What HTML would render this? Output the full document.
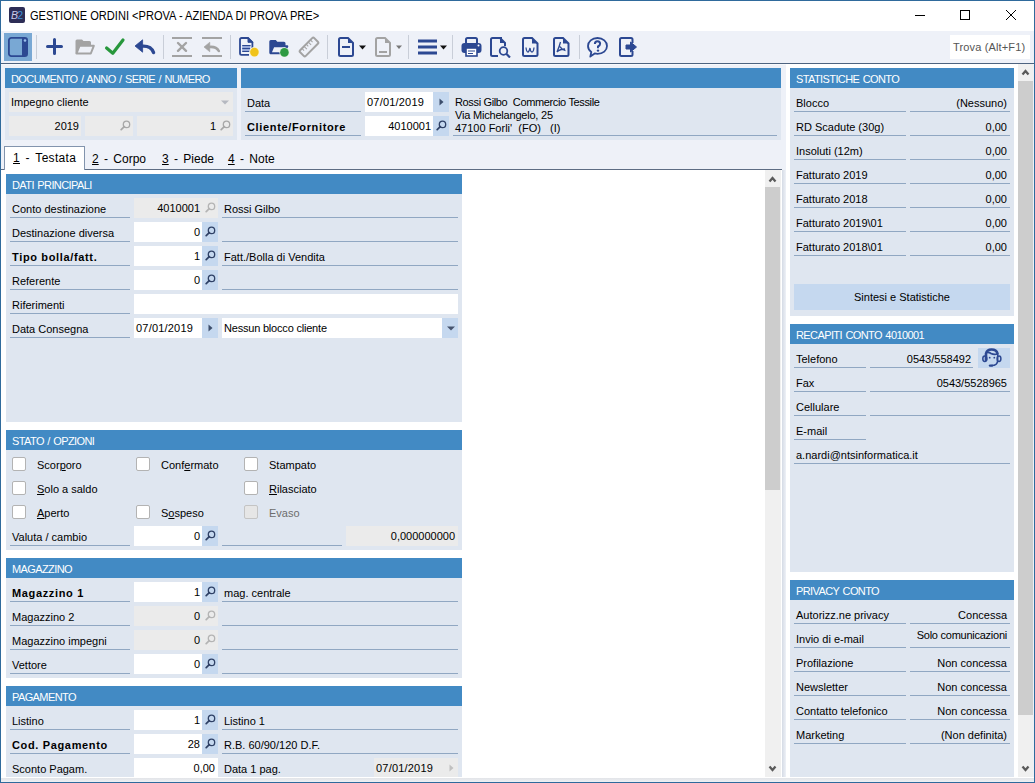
<!DOCTYPE html><html><head><meta charset="utf-8"><style>
html,body{margin:0;padding:0;}
body{width:1035px;height:783px;overflow:hidden;position:relative;background:#2f6a9c;font-family:"Liberation Sans",sans-serif;font-size:11px;color:#000;}
div,svg{position:absolute;}
.t{white-space:pre;}
u{text-decoration:underline;text-underline-offset:1px;}
</style></head><body>
<div style="left:1px;top:1px;width:1033px;height:781px;background:#eef1f8;"></div>
<div style="left:1px;top:1px;width:1033px;height:30px;background:#fff;"></div>
<div style="left:9px;top:7px;width:16px;height:16px;background:#2d2d56;border-radius:2px;"></div>
<div class="t" style="left:11px;top:8px;line-height:14px;font-size:10.5px;font-style:italic;color:#c9c9e6;letter-spacing:-0.8px;">B<span style="color:#3d93d6;font-style:normal;">2</span></div>
<div class="t" style="left:30px;top:8px;line-height:16px;font-size:12px;transform:scaleX(0.922);transform-origin:0 0;">GESTIONE ORDINI &lt;PROVA - AZIENDA DI PROVA PRE&gt;</div>
<div style="left:915px;top:15px;width:10px;height:1px;background:#000;"></div>
<div style="left:960px;top:10px;width:8px;height:8px;border:1px solid #000;"></div>
<svg style="left:1005px;top:9px;" width="12" height="12" viewBox="0 0 12 12"><path d="M1 1 L11 11 M11 1 L1 11" stroke="#000" stroke-width="1"/></svg>
<div style="left:1px;top:31px;width:1033px;height:32px;background:#eef1f8;"></div>
<div style="left:1px;top:63px;width:1033px;height:1px;background:#4d6380;"></div>
<div style="left:1px;top:64px;width:1033px;height:1px;background:#f7f9fc;"></div>
<div style="left:4px;top:33px;width:28px;height:28px;background:#79a8d4;"></div>
<svg style="left:8px;top:37px;" width="20" height="20" viewBox="0 0 20 20"><rect x="0.9" y="0.9" width="18.2" height="18.2" rx="2.4" fill="none" stroke="#2c4892" stroke-width="1.8"/><rect x="14" y="1" width="5" height="18" fill="#2c4892"/><circle cx="17" cy="3.5" r="1.3" fill="#9cc0ec"/></svg>
<div style="left:36px;top:35px;width:1px;height:24px;background:#c9ced8;"></div>
<div style="left:163px;top:35px;width:1px;height:24px;background:#c9ced8;"></div>
<div style="left:230px;top:35px;width:1px;height:24px;background:#c9ced8;"></div>
<div style="left:327px;top:35px;width:1px;height:24px;background:#c9ced8;"></div>
<div style="left:408px;top:35px;width:1px;height:24px;background:#c9ced8;"></div>
<div style="left:452px;top:35px;width:1px;height:24px;background:#c9ced8;"></div>
<div style="left:579px;top:35px;width:1px;height:24px;background:#c9ced8;"></div>
<svg style="left:46px;top:38px;" width="17" height="17" viewBox="0 0 17 17"><path d="M8.5 1.5 V15.5 M1.5 8.5 H15.5" stroke="#2c4892" stroke-width="3" stroke-linecap="round"/></svg>
<svg style="left:75px;top:39px;" width="20" height="16" viewBox="0 0 20 16"><path d="M0.5 2 Q0.5 0.5 2 0.5 H7 L8.5 2 H14.5 Q16 2 16 3.5 V6 H4.5 L1.5 14.5 H0.5 Z" fill="#a3a3a3"/><path d="M1.5 14.5 L4.5 6.8 H18.8 L15.8 14.5 Z" fill="none" stroke="#a3a3a3" stroke-width="2" stroke-linejoin="round"/></svg>
<svg style="left:104px;top:37px;" width="22" height="19" viewBox="0 0 22 19"><path d="M2.6 11 L8.8 16.2 L19 3" fill="none" stroke="#27973c" stroke-width="3.2" stroke-linecap="round" stroke-linejoin="round"/></svg>
<svg style="left:134px;top:39px;" width="22" height="16" viewBox="0 0 22 16"><path d="M1 7 L8.6 0.8 V13.2 Z" fill="#2c4892" stroke="#2c4892" stroke-width="0.8" stroke-linejoin="round"/><path d="M7.5 7.3 Q17 6.5 19.6 13.6" fill="none" stroke="#2c4892" stroke-width="3.3" stroke-linecap="round"/></svg>
<svg style="left:171px;top:37px;" width="22" height="21" viewBox="0 0 22 21"><path d="M1 1 H21 M1 19 H21" stroke="#a3a3a3" stroke-width="2"/><path d="M7 6 L15 13.8 M15 6 L7 13.8" stroke="#a3a3a3" stroke-width="2.4" stroke-linecap="round"/></svg>
<svg style="left:201px;top:37px;" width="22" height="21" viewBox="0 0 22 21"><path d="M1 1 H21 M1 19 H21" stroke="#a3a3a3" stroke-width="2"/><path d="M3 10 L8.8 5.2 V14.8 Z" fill="#a3a3a3" stroke="#a3a3a3" stroke-width="0.6" stroke-linejoin="round"/><path d="M8 10 Q15.5 9.3 17.8 14" fill="none" stroke="#a3a3a3" stroke-width="2.6" stroke-linecap="round"/></svg>
<svg style="left:238px;top:36px;" width="22" height="22" viewBox="0 0 22 22"><path d="M10 2 H3.6 Q2 2 2 3.6 V17.2 Q2 18.8 3.6 18.8 H11" fill="none" stroke="#2c4892" stroke-width="1.8"/><path d="M9.5 2 H10 L14.4 6.4 V12" fill="none" stroke="#2c4892" stroke-width="1.8"/><path d="M10 1.5 L14.8 6.3 H10 Z" fill="#2c4892" stroke="#2c4892" stroke-width="1"/><rect x="4.2" y="9.6" width="8" height="5.8" fill="#b9c9f1"/><path d="M4.2 9.6 H12.6 M4.2 12.5 H12.2 M4.2 15.4 H11.5" stroke="#2c4892" stroke-width="1.3"/><circle cx="16.4" cy="16.1" r="5" fill="#fbf3cf"/><circle cx="16.4" cy="16.1" r="4.3" fill="#f0c31a"/></svg>
<svg style="left:268px;top:39px;" width="22" height="18" viewBox="0 0 22 18"><path d="M1.3 2.5 Q1.3 1 2.8 1 H7.8 L9.3 2.8 H16 Q17.5 2.8 17.5 4.3 V7.5 H5.5 L2.5 14.5 Q1.3 14.3 1.3 13 Z" fill="#2c4892"/><path d="M2.5 14.2 L5.5 7.2 H19.3 L16 14.2 Z" fill="none" stroke="#2c4892" stroke-width="2" stroke-linejoin="round"/><circle cx="16.4" cy="13.4" r="5" fill="#e3f3e0"/><circle cx="16.4" cy="13.4" r="4.3" fill="#2e9a43"/></svg>
<svg style="left:298px;top:36px;" width="22" height="22" viewBox="0 0 22 22"><g transform="rotate(-45 11 11)"><rect x="1" y="7" width="20" height="8" rx="1.5" fill="none" stroke="#a3a3a3" stroke-width="2"/><path d="M5 7 V10 M8 7 V11 M11 7 V10 M14 7 V11 M17 7 V10" stroke="#a3a3a3" stroke-width="1"/></g></svg>
<svg style="left:338px;top:37px;" width="16" height="20" viewBox="0 0 16 20"><path d="M1 2.5 Q1 1 2.5 1 H10 L15 6 V17.5 Q15 19 13.5 19 H2.5 Q1 19 1 17.5 Z" fill="none" stroke="#2c4892" stroke-width="2"/><path d="M10 1 V6 H15 Z" fill="#2c4892"/><path d="M4 10 H12" stroke="#2c4892" stroke-width="2"/></svg>
<svg style="left:359px;top:45px;" width="7" height="5" viewBox="0 0 7 5"><polygon points="0,0.5 7,0.5 3.5,4.5" fill="#111"/></svg>
<svg style="left:375px;top:37px;" width="16" height="20" viewBox="0 0 16 20"><path d="M1 2.5 Q1 1 2.5 1 H10 L15 6 V17.5 Q15 19 13.5 19 H2.5 Q1 19 1 17.5 Z" fill="none" stroke="#a3a3a3" stroke-width="2"/><path d="M10 1 V6 H15 Z" fill="#a3a3a3"/><path d="M4 15 H12" stroke="#a3a3a3" stroke-width="2"/></svg>
<svg style="left:396px;top:45px;" width="7" height="5" viewBox="0 0 7 5"><polygon points="0,0.5 6,0.5 3,4" fill="#777"/></svg>
<svg style="left:418px;top:39px;" width="19" height="16" viewBox="0 0 19 16"><path d="M0 2 H19 M0 8 H19 M0 14 H19" stroke="#2c4892" stroke-width="3"/></svg>
<svg style="left:440px;top:45px;" width="7" height="5" viewBox="0 0 7 5"><polygon points="0,0.5 7,0.5 3.5,4.5" fill="#111"/></svg>
<svg style="left:461px;top:37px;" width="21" height="20" viewBox="0 0 21 20"><rect x="5" y="1" width="11" height="6" rx="1.5" fill="none" stroke="#2c4892" stroke-width="2"/><rect x="0.5" y="6" width="20" height="10" rx="3" fill="#2c4892"/><rect x="5" y="11" width="11" height="8" fill="#fff" stroke="#2c4892" stroke-width="1.6"/><path d="M7 14 H14 M7 16.5 H12" stroke="#2c4892" stroke-width="1.2"/><circle cx="17.5" cy="8.5" r="1" fill="#fff"/></svg>
<svg style="left:490px;top:37px;" width="22" height="21" viewBox="0 0 22 21"><path d="M12 1 H2.5 Q1 1 1 2.5 V17.5 Q1 19 2.5 19 H8" fill="none" stroke="#2c4892" stroke-width="2"/><path d="M10 1 L15 6 V9" fill="none" stroke="#2c4892" stroke-width="2"/><path d="M10 1 V6 H15 Z" fill="#2c4892"/><circle cx="13.5" cy="14" r="3.8" fill="none" stroke="#2c4892" stroke-width="1.8"/><path d="M16.3 16.8 L20 20.5" stroke="#2c4892" stroke-width="2.2"/></svg>
<svg style="left:522px;top:37px;" width="17" height="20" viewBox="0 0 17 20"><path d="M1 2.5 Q1 1 2.5 1 H10 L15.5 6.5 V17.5 Q15.5 19 14 19 H2.5 Q1 19 1 17.5 Z" fill="none" stroke="#2c4892" stroke-width="2"/><path d="M10 1 V6.5 H15.5 Z" fill="#2c4892"/><path d="M4 10.5 Q4.5 15 6 15 Q7 15 8 11 Q8.5 15 10 15 Q11.5 15 12 10.5" fill="none" stroke="#2c4892" stroke-width="1.3"/></svg>
<svg style="left:553px;top:37px;" width="17" height="20" viewBox="0 0 17 20"><path d="M1 2.5 Q1 1 2.5 1 H10 L15.5 6.5 V17.5 Q15.5 19 14 19 H2.5 Q1 19 1 17.5 Z" fill="none" stroke="#2c4892" stroke-width="2"/><path d="M10 1 V6.5 H15.5 Z" fill="#2c4892"/><path d="M7.5 5 Q6.5 9 4 15 M7 9.5 Q9 13 12.5 13.5 M4 15 Q7 12 12 12" fill="none" stroke="#2c4892" stroke-width="1.3"/></svg>
<svg style="left:587px;top:37px;" width="22" height="21" viewBox="0 0 22 21"><path d="M10.5 1 C16 1 20 4.5 20 9 C20 13.5 16 16.8 10.5 16.8 C9.5 16.8 8.6 16.7 7.7 16.4 L3.3 19.6 L4.3 15 C2.3 13.5 1 11.4 1 9 C1 4.5 5 1 10.5 1 Z" fill="none" stroke="#2c4892" stroke-width="1.8" stroke-linejoin="round"/><path d="M7.9 6.9 Q7.9 4.2 10.5 4.2 Q13.1 4.2 13.1 6.7 Q13.1 8.4 11 9.5 V11.2" fill="none" stroke="#2c4892" stroke-width="2"/><circle cx="11" cy="13.6" r="1.2" fill="#2c4892"/></svg>
<svg style="left:619px;top:37px;" width="19" height="20" viewBox="0 0 19 20"><path d="M13.5 6 V2.5 Q13.5 1 12 1 H2.5 Q1 1 1 2.5 V17.5 Q1 19 2.5 19 H12 Q13.5 19 13.5 17.5 V14" fill="none" stroke="#2c4892" stroke-width="2"/><path d="M7 8 H11.5 V5 L17.5 10 L11.5 15 V12 H7 Z" fill="#2c4892" stroke="#2c4892" stroke-width="1" stroke-linejoin="round"/></svg>
<div style="left:950px;top:35px;width:80px;height:24px;background:#fff;"></div>
<div class="t" style="left:953px;top:35px;line-height:24px;color:#555;font-size:11px;letter-spacing:0.15px;">Trova (Alt+F1)</div>
<div style="left:5px;top:68px;width:232px;height:20px;background:#428ac4;"></div>
<div class="t" style="left:11px;top:69px;line-height:20px;color:#fff;letter-spacing:-0.6px;word-spacing:1px;">DOCUMENTO / ANNO / SERIE / NUMERO</div>
<div style="left:5px;top:88px;width:232px;height:52px;background:#dfe6f0;"></div>
<div style="left:9px;top:92px;width:224px;height:20px;background:#ebebeb;"></div>
<div class="t" style="left:11px;top:92px;line-height:20px;">Impegno cliente</div>
<svg style="left:221px;top:100px;" width="8" height="5" viewBox="0 0 8 5"><polygon points="0,0.5 8,0.5 4,4.5" fill="#b5b8c0"/></svg>
<div style="left:9px;top:116px;width:72px;height:20px;background:#ebebeb;"></div>
<div class="t" style="left:-321px;width:400px;text-align:right;top:116px;line-height:20px;">2019</div>
<div style="left:85px;top:116px;width:48px;height:20px;background:#ebebeb;"></div>
<svg style="left:120px;top:120px;" width="11" height="11" viewBox="0 0 11 11"><circle cx="6.5" cy="4.4" r="3.2" fill="none" stroke="#a8a8a8" stroke-width="1.3"/><line x1="4.2" y1="6.7" x2="1.2" y2="9.7" stroke="#a8a8a8" stroke-width="1.7" stroke-linecap="round"/></svg>
<div style="left:137px;top:116px;width:96px;height:20px;background:#ebebeb;"></div>
<div class="t" style="left:-184px;width:400px;text-align:right;top:116px;line-height:20px;">1</div>
<svg style="left:220px;top:120px;" width="11" height="11" viewBox="0 0 11 11"><circle cx="6.5" cy="4.4" r="3.2" fill="none" stroke="#a8a8a8" stroke-width="1.3"/><line x1="4.2" y1="6.7" x2="1.2" y2="9.7" stroke="#a8a8a8" stroke-width="1.7" stroke-linecap="round"/></svg>
<div style="left:241px;top:68px;width:540px;height:20px;background:#428ac4;"></div>
<div style="left:241px;top:88px;width:540px;height:52px;background:#dfe6f0;"></div>
<div style="left:245px;top:111px;width:116px;height:1px;background:#90a7c2;"></div>
<div class="t" style="left:247px;top:93px;line-height:20px;">Data</div>
<div style="left:245px;top:135px;width:116px;height:1px;background:#90a7c2;"></div>
<div class="t" style="left:247px;top:117px;line-height:20px;font-weight:bold;letter-spacing:0.65px;">Cliente/Fornitore</div>
<div style="left:365px;top:92px;width:84px;height:20px;background:#fff;"></div>
<div style="left:433px;top:92px;width:16px;height:20px;background:#c5d8ef;"></div>
<div class="t" style="left:367px;top:92px;line-height:20px;letter-spacing:0.2px;">07/01/2019</div>
<svg style="left:439px;top:98px;" width="5" height="8" viewBox="0 0 5 8"><polygon points="0.5,0.5 4.5,4 0.5,7.5" fill="#3c4d6b"/></svg>
<div style="left:365px;top:116px;width:84px;height:20px;background:#fff;"></div>
<div style="left:433px;top:116px;width:16px;height:20px;background:#c5d8ef;"></div>
<div class="t" style="left:31px;width:400px;text-align:right;top:116px;line-height:20px;">4010001</div>
<svg style="left:436px;top:120px;" width="11" height="11" viewBox="0 0 11 11"><circle cx="6.5" cy="4.4" r="3.2" fill="none" stroke="#2f4166" stroke-width="1.3"/><line x1="4.2" y1="6.7" x2="1.2" y2="9.7" stroke="#2f4166" stroke-width="1.7" stroke-linecap="round"/></svg>
<div style="left:453px;top:135px;width:324px;height:1px;background:#90a7c2;"></div>
<div class="t" style="left:455px;top:96px;line-height:13px;letter-spacing:-0.35px;">Rossi Gilbo  Commercio Tessile</div>
<div class="t" style="left:455px;top:109px;line-height:13px;letter-spacing:-0.2px;">Via Michelangelo, 25</div>
<div class="t" style="left:455px;top:122px;line-height:13px;">47100 Forli'  (FO)   (I)</div>
<div style="left:1px;top:169px;width:781px;height:1px;background:#5d6c83;"></div>
<div style="left:4px;top:146px;width:79px;height:24px;background:#fff;border:1px solid #8294ad;border-bottom:none;"></div>
<div class="t" style="left:13px;top:147px;line-height:22px;font-size:12px;word-spacing:2px;letter-spacing:0.3px;"><u>1</u> - Testata</div>
<div class="t" style="left:92px;top:148px;line-height:22px;font-size:12px;word-spacing:2px;"><u>2</u> - Corpo</div>
<div class="t" style="left:162px;top:148px;line-height:22px;font-size:12px;word-spacing:2px;"><u>3</u> - Piede</div>
<div class="t" style="left:228px;top:148px;line-height:22px;font-size:12px;word-spacing:2px;"><u>4</u> - Note</div>
<div style="left:1px;top:170px;width:764px;height:607px;background:#fff;"></div>
<div style="left:765px;top:170px;width:16px;height:607px;background:#f0f0f0;"></div>
<div style="left:781px;top:170px;width:1px;height:607px;background:#fff;"></div>
<div style="left:765px;top:187px;width:15px;height:303px;background:#cdcdcd;"></div>
<svg style="left:768px;top:175px;" width="9" height="9" viewBox="0 0 9 9"><path d="M1.5 6.5 L4.5 3 L7.5 6.5" fill="none" stroke="#5a5a5a" stroke-width="2.3"/></svg>
<svg style="left:768px;top:764px;" width="9" height="9" viewBox="0 0 9 9"><path d="M1.5 2.5 L4.5 6 L7.5 2.5" fill="none" stroke="#5a5a5a" stroke-width="2.3"/></svg>
<div style="left:6px;top:174px;width:456px;height:20px;background:#428ac4;"></div>
<div class="t" style="left:12px;top:175px;line-height:20px;color:#fff;letter-spacing:-0.6px;word-spacing:1px;">DATI PRINCIPALI</div>
<div style="left:6px;top:194px;width:456px;height:228px;background:#dfe6f0;"></div>
<div style="left:10px;top:217px;width:120px;height:1px;background:#90a7c2;"></div>
<div class="t" style="left:12px;top:199px;line-height:20px;">Conto destinazione</div>
<div style="left:10px;top:241px;width:120px;height:1px;background:#90a7c2;"></div>
<div class="t" style="left:12px;top:223px;line-height:20px;">Destinazione diversa</div>
<div style="left:10px;top:265px;width:120px;height:1px;background:#90a7c2;"></div>
<div class="t" style="left:12px;top:247px;line-height:20px;font-weight:bold;letter-spacing:0.65px;">Tipo bolla/fatt.</div>
<div style="left:10px;top:289px;width:120px;height:1px;background:#90a7c2;"></div>
<div class="t" style="left:12px;top:271px;line-height:20px;">Referente</div>
<div style="left:10px;top:313px;width:120px;height:1px;background:#90a7c2;"></div>
<div class="t" style="left:12px;top:295px;line-height:20px;">Riferimenti</div>
<div style="left:10px;top:337px;width:120px;height:1px;background:#90a7c2;"></div>
<div class="t" style="left:12px;top:319px;line-height:20px;">Data Consegna</div>
<div style="left:134px;top:198px;width:84px;height:20px;background:#ebebeb;"></div>
<div class="t" style="left:-200px;width:400px;text-align:right;top:198px;line-height:20px;">4010001</div>
<svg style="left:205px;top:202px;" width="11" height="11" viewBox="0 0 11 11"><circle cx="6.5" cy="4.4" r="3.2" fill="none" stroke="#b4b4b4" stroke-width="1.3"/><line x1="4.2" y1="6.7" x2="1.2" y2="9.7" stroke="#b4b4b4" stroke-width="1.7" stroke-linecap="round"/></svg>
<div style="left:222px;top:217px;width:236px;height:1px;background:#90a7c2;"></div>
<div class="t" style="left:224px;top:199px;line-height:20px;">Rossi Gilbo</div>
<div style="left:134px;top:222px;width:84px;height:20px;background:#fff;"></div>
<div style="left:202px;top:222px;width:16px;height:20px;background:#c5d8ef;"></div>
<div class="t" style="left:-200px;width:400px;text-align:right;top:222px;line-height:20px;">0</div>
<svg style="left:205px;top:226px;" width="11" height="11" viewBox="0 0 11 11"><circle cx="6.5" cy="4.4" r="3.2" fill="none" stroke="#2f4166" stroke-width="1.3"/><line x1="4.2" y1="6.7" x2="1.2" y2="9.7" stroke="#2f4166" stroke-width="1.7" stroke-linecap="round"/></svg>
<div style="left:222px;top:241px;width:236px;height:1px;background:#90a7c2;"></div>
<div style="left:134px;top:246px;width:84px;height:20px;background:#fff;"></div>
<div style="left:202px;top:246px;width:16px;height:20px;background:#c5d8ef;"></div>
<div class="t" style="left:-200px;width:400px;text-align:right;top:246px;line-height:20px;">1</div>
<svg style="left:205px;top:250px;" width="11" height="11" viewBox="0 0 11 11"><circle cx="6.5" cy="4.4" r="3.2" fill="none" stroke="#2f4166" stroke-width="1.3"/><line x1="4.2" y1="6.7" x2="1.2" y2="9.7" stroke="#2f4166" stroke-width="1.7" stroke-linecap="round"/></svg>
<div style="left:222px;top:265px;width:236px;height:1px;background:#90a7c2;"></div>
<div class="t" style="left:224px;top:247px;line-height:20px;">Fatt./Bolla di Vendita</div>
<div style="left:134px;top:270px;width:84px;height:20px;background:#fff;"></div>
<div style="left:202px;top:270px;width:16px;height:20px;background:#c5d8ef;"></div>
<div class="t" style="left:-200px;width:400px;text-align:right;top:270px;line-height:20px;">0</div>
<svg style="left:205px;top:274px;" width="11" height="11" viewBox="0 0 11 11"><circle cx="6.5" cy="4.4" r="3.2" fill="none" stroke="#2f4166" stroke-width="1.3"/><line x1="4.2" y1="6.7" x2="1.2" y2="9.7" stroke="#2f4166" stroke-width="1.7" stroke-linecap="round"/></svg>
<div style="left:222px;top:289px;width:236px;height:1px;background:#90a7c2;"></div>
<div style="left:134px;top:294px;width:324px;height:20px;background:#fff;"></div>
<div style="left:134px;top:318px;width:84px;height:20px;background:#fff;"></div>
<div style="left:202px;top:318px;width:16px;height:20px;background:#c5d8ef;"></div>
<div class="t" style="left:136px;top:318px;line-height:20px;letter-spacing:0.2px;">07/01/2019</div>
<svg style="left:208px;top:324px;" width="5" height="8" viewBox="0 0 5 8"><polygon points="0.5,0.5 4.5,4 0.5,7.5" fill="#3c4d6b"/></svg>
<div style="left:222px;top:318px;width:236px;height:20px;background:#fff;"></div>
<div style="left:442px;top:318px;width:16px;height:20px;background:#c5d8ef;"></div>
<div class="t" style="left:224px;top:318px;line-height:20px;letter-spacing:-0.2px;">Nessun blocco cliente</div>
<svg style="left:447px;top:326px;" width="8" height="5" viewBox="0 0 8 5"><polygon points="0,0.5 8,0.5 4,4.5" fill="#46546e"/></svg>
<div style="left:6px;top:430px;width:456px;height:20px;background:#428ac4;"></div>
<div class="t" style="left:12px;top:431px;line-height:20px;color:#fff;letter-spacing:-0.6px;word-spacing:1px;">STATO / OPZIONI</div>
<div style="left:6px;top:450px;width:456px;height:100px;background:#dfe6f0;"></div>
<div style="left:12px;top:457px;width:12px;height:12px;background:#fff;border:1px solid #b3b3b3;border-radius:2px;"></div>
<div class="t" style="left:37px;top:455px;line-height:20px;">Scor<u>p</u>oro</div>
<div style="left:136px;top:457px;width:12px;height:12px;background:#fff;border:1px solid #b3b3b3;border-radius:2px;"></div>
<div class="t" style="left:161px;top:455px;line-height:20px;">Conf<u>e</u>rmato</div>
<div style="left:244px;top:457px;width:12px;height:12px;background:#fff;border:1px solid #b3b3b3;border-radius:2px;"></div>
<div class="t" style="left:269px;top:455px;line-height:20px;">Stampato</div>
<div style="left:12px;top:481px;width:12px;height:12px;background:#fff;border:1px solid #b3b3b3;border-radius:2px;"></div>
<div class="t" style="left:37px;top:479px;line-height:20px;"><u>S</u>olo a saldo</div>
<div style="left:244px;top:481px;width:12px;height:12px;background:#fff;border:1px solid #b3b3b3;border-radius:2px;"></div>
<div class="t" style="left:269px;top:479px;line-height:20px;"><u>R</u>ilasciato</div>
<div style="left:12px;top:505px;width:12px;height:12px;background:#fff;border:1px solid #b3b3b3;border-radius:2px;"></div>
<div class="t" style="left:37px;top:503px;line-height:20px;"><u>A</u>perto</div>
<div style="left:136px;top:505px;width:12px;height:12px;background:#fff;border:1px solid #b3b3b3;border-radius:2px;"></div>
<div class="t" style="left:161px;top:503px;line-height:20px;">S<u>o</u>speso</div>
<div style="left:244px;top:505px;width:12px;height:12px;background:#e6e6e6;border:1px solid #c4c4c4;border-radius:2px;"></div>
<div class="t" style="left:269px;top:503px;line-height:20px;color:#6d6d6d;">Evaso</div>
<div style="left:10px;top:545px;width:120px;height:1px;background:#90a7c2;"></div>
<div class="t" style="left:12px;top:527px;line-height:20px;">Valuta / cambio</div>
<div style="left:134px;top:526px;width:84px;height:20px;background:#fff;"></div>
<div style="left:202px;top:526px;width:16px;height:20px;background:#c5d8ef;"></div>
<div class="t" style="left:-200px;width:400px;text-align:right;top:526px;line-height:20px;">0</div>
<svg style="left:205px;top:530px;" width="11" height="11" viewBox="0 0 11 11"><circle cx="6.5" cy="4.4" r="3.2" fill="none" stroke="#2f4166" stroke-width="1.3"/><line x1="4.2" y1="6.7" x2="1.2" y2="9.7" stroke="#2f4166" stroke-width="1.7" stroke-linecap="round"/></svg>
<div style="left:222px;top:545px;width:120px;height:1px;background:#90a7c2;"></div>
<div style="left:346px;top:526px;width:112px;height:20px;background:#ebebeb;"></div>
<div class="t" style="left:55px;width:400px;text-align:right;top:526px;line-height:20px;">0,000000000</div>
<div style="left:6px;top:558px;width:456px;height:20px;background:#428ac4;"></div>
<div class="t" style="left:12px;top:559px;line-height:20px;color:#fff;letter-spacing:-0.6px;word-spacing:1px;">MAGAZZINO</div>
<div style="left:6px;top:578px;width:456px;height:100px;background:#dfe6f0;"></div>
<div style="left:10px;top:601px;width:120px;height:1px;background:#90a7c2;"></div>
<div class="t" style="left:12px;top:583px;line-height:20px;font-weight:bold;letter-spacing:0.65px;">Magazzino 1</div>
<div style="left:222px;top:601px;width:236px;height:1px;background:#90a7c2;"></div>
<div style="left:10px;top:625px;width:120px;height:1px;background:#90a7c2;"></div>
<div class="t" style="left:12px;top:607px;line-height:20px;">Magazzino 2</div>
<div style="left:222px;top:625px;width:236px;height:1px;background:#90a7c2;"></div>
<div style="left:10px;top:649px;width:120px;height:1px;background:#90a7c2;"></div>
<div class="t" style="left:12px;top:631px;line-height:20px;">Magazzino impegni</div>
<div style="left:222px;top:649px;width:236px;height:1px;background:#90a7c2;"></div>
<div style="left:10px;top:673px;width:120px;height:1px;background:#90a7c2;"></div>
<div class="t" style="left:12px;top:655px;line-height:20px;">Vettore</div>
<div style="left:222px;top:673px;width:236px;height:1px;background:#90a7c2;"></div>
<div style="left:134px;top:582px;width:84px;height:20px;background:#fff;"></div>
<div style="left:202px;top:582px;width:16px;height:20px;background:#c5d8ef;"></div>
<div class="t" style="left:-200px;width:400px;text-align:right;top:582px;line-height:20px;">1</div>
<svg style="left:205px;top:586px;" width="11" height="11" viewBox="0 0 11 11"><circle cx="6.5" cy="4.4" r="3.2" fill="none" stroke="#2f4166" stroke-width="1.3"/><line x1="4.2" y1="6.7" x2="1.2" y2="9.7" stroke="#2f4166" stroke-width="1.7" stroke-linecap="round"/></svg>
<div class="t" style="left:224px;top:583px;line-height:20px;">mag. centrale</div>
<div style="left:134px;top:606px;width:84px;height:20px;background:#ebebeb;"></div>
<div class="t" style="left:-200px;width:400px;text-align:right;top:606px;line-height:20px;">0</div>
<svg style="left:205px;top:610px;" width="11" height="11" viewBox="0 0 11 11"><circle cx="6.5" cy="4.4" r="3.2" fill="none" stroke="#b4b4b4" stroke-width="1.3"/><line x1="4.2" y1="6.7" x2="1.2" y2="9.7" stroke="#b4b4b4" stroke-width="1.7" stroke-linecap="round"/></svg>
<div style="left:134px;top:630px;width:84px;height:20px;background:#ebebeb;"></div>
<div class="t" style="left:-200px;width:400px;text-align:right;top:630px;line-height:20px;">0</div>
<svg style="left:205px;top:634px;" width="11" height="11" viewBox="0 0 11 11"><circle cx="6.5" cy="4.4" r="3.2" fill="none" stroke="#b4b4b4" stroke-width="1.3"/><line x1="4.2" y1="6.7" x2="1.2" y2="9.7" stroke="#b4b4b4" stroke-width="1.7" stroke-linecap="round"/></svg>
<div style="left:134px;top:654px;width:84px;height:20px;background:#fff;"></div>
<div style="left:202px;top:654px;width:16px;height:20px;background:#c5d8ef;"></div>
<div class="t" style="left:-200px;width:400px;text-align:right;top:654px;line-height:20px;">0</div>
<svg style="left:205px;top:658px;" width="11" height="11" viewBox="0 0 11 11"><circle cx="6.5" cy="4.4" r="3.2" fill="none" stroke="#2f4166" stroke-width="1.3"/><line x1="4.2" y1="6.7" x2="1.2" y2="9.7" stroke="#2f4166" stroke-width="1.7" stroke-linecap="round"/></svg>
<div style="left:6px;top:686px;width:456px;height:20px;background:#428ac4;"></div>
<div class="t" style="left:12px;top:687px;line-height:20px;color:#fff;letter-spacing:-0.6px;word-spacing:1px;">PAGAMENTO</div>
<div style="left:6px;top:706px;width:456px;height:71px;background:#dfe6f0;"></div>
<div style="left:10px;top:729px;width:120px;height:1px;background:#90a7c2;"></div>
<div class="t" style="left:12px;top:711px;line-height:20px;">Listino</div>
<div style="left:10px;top:753px;width:120px;height:1px;background:#90a7c2;"></div>
<div class="t" style="left:12px;top:735px;line-height:20px;font-weight:bold;letter-spacing:0.65px;">Cod. Pagamento</div>
<div class="t" style="left:12px;top:759px;line-height:20px;">Sconto Pagam.</div>
<div style="left:134px;top:710px;width:84px;height:20px;background:#fff;"></div>
<div style="left:202px;top:710px;width:16px;height:20px;background:#c5d8ef;"></div>
<div class="t" style="left:-200px;width:400px;text-align:right;top:710px;line-height:20px;">1</div>
<svg style="left:205px;top:714px;" width="11" height="11" viewBox="0 0 11 11"><circle cx="6.5" cy="4.4" r="3.2" fill="none" stroke="#2f4166" stroke-width="1.3"/><line x1="4.2" y1="6.7" x2="1.2" y2="9.7" stroke="#2f4166" stroke-width="1.7" stroke-linecap="round"/></svg>
<div style="left:222px;top:729px;width:236px;height:1px;background:#90a7c2;"></div>
<div class="t" style="left:224px;top:711px;line-height:20px;">Listino 1</div>
<div style="left:134px;top:734px;width:84px;height:20px;background:#fff;"></div>
<div style="left:202px;top:734px;width:16px;height:20px;background:#c5d8ef;"></div>
<div class="t" style="left:-200px;width:400px;text-align:right;top:734px;line-height:20px;">28</div>
<svg style="left:205px;top:738px;" width="11" height="11" viewBox="0 0 11 11"><circle cx="6.5" cy="4.4" r="3.2" fill="none" stroke="#2f4166" stroke-width="1.3"/><line x1="4.2" y1="6.7" x2="1.2" y2="9.7" stroke="#2f4166" stroke-width="1.7" stroke-linecap="round"/></svg>
<div style="left:222px;top:753px;width:236px;height:1px;background:#90a7c2;"></div>
<div class="t" style="left:224px;top:735px;line-height:20px;">R.B. 60/90/120 D.F.</div>
<div style="left:134px;top:758px;width:84px;height:19px;background:#fff;"></div>
<div class="t" style="left:-185px;width:400px;text-align:right;top:758px;line-height:20px;">0,00</div>
<div class="t" style="left:224px;top:759px;line-height:20px;">Data 1 pag.</div>
<div style="left:374px;top:758px;width:84px;height:19px;background:#ebebeb;"></div>
<div class="t" style="left:376px;top:758px;line-height:20px;letter-spacing:0.2px;">07/01/2019</div>
<svg style="left:449px;top:764px;" width="5" height="8" viewBox="0 0 5 8"><polygon points="0.5,0.5 4.5,4 0.5,7.5" fill="#c0c0c0"/></svg>
<div style="left:786px;top:64px;width:232px;height:713px;background:#fff;"></div>
<div style="left:782px;top:170px;width:4px;height:607px;background:linear-gradient(to right,#d5dbe5,#eef1f7);"></div>
<div style="left:790px;top:68px;width:224px;height:20px;background:#428ac4;"></div>
<div class="t" style="left:796px;top:69px;line-height:20px;color:#fff;letter-spacing:-0.6px;word-spacing:1px;">STATISTICHE CONTO</div>
<div style="left:790px;top:88px;width:224px;height:228px;background:#dfe6f0;"></div>
<div style="left:794px;top:111px;width:112px;height:1px;background:#90a7c2;"></div>
<div style="left:910px;top:111px;width:100px;height:1px;background:#90a7c2;"></div>
<div class="t" style="left:796px;top:93px;line-height:20px;">Blocco</div>
<div class="t" style="left:607px;width:400px;text-align:right;top:93px;line-height:20px;">(Nessuno)</div>
<div style="left:794px;top:135px;width:112px;height:1px;background:#90a7c2;"></div>
<div style="left:910px;top:135px;width:100px;height:1px;background:#90a7c2;"></div>
<div class="t" style="left:796px;top:117px;line-height:20px;">RD Scadute (30g)</div>
<div class="t" style="left:607px;width:400px;text-align:right;top:117px;line-height:20px;">0,00</div>
<div style="left:794px;top:159px;width:112px;height:1px;background:#90a7c2;"></div>
<div style="left:910px;top:159px;width:100px;height:1px;background:#90a7c2;"></div>
<div class="t" style="left:796px;top:141px;line-height:20px;">Insoluti (12m)</div>
<div class="t" style="left:607px;width:400px;text-align:right;top:141px;line-height:20px;">0,00</div>
<div style="left:794px;top:183px;width:112px;height:1px;background:#90a7c2;"></div>
<div style="left:910px;top:183px;width:100px;height:1px;background:#90a7c2;"></div>
<div class="t" style="left:796px;top:165px;line-height:20px;">Fatturato 2019</div>
<div class="t" style="left:607px;width:400px;text-align:right;top:165px;line-height:20px;">0,00</div>
<div style="left:794px;top:207px;width:112px;height:1px;background:#90a7c2;"></div>
<div style="left:910px;top:207px;width:100px;height:1px;background:#90a7c2;"></div>
<div class="t" style="left:796px;top:189px;line-height:20px;">Fatturato 2018</div>
<div class="t" style="left:607px;width:400px;text-align:right;top:189px;line-height:20px;">0,00</div>
<div style="left:794px;top:231px;width:112px;height:1px;background:#90a7c2;"></div>
<div style="left:910px;top:231px;width:100px;height:1px;background:#90a7c2;"></div>
<div class="t" style="left:796px;top:213px;line-height:20px;">Fatturato 2019\01</div>
<div class="t" style="left:607px;width:400px;text-align:right;top:213px;line-height:20px;">0,00</div>
<div style="left:794px;top:255px;width:112px;height:1px;background:#90a7c2;"></div>
<div style="left:910px;top:255px;width:100px;height:1px;background:#90a7c2;"></div>
<div class="t" style="left:796px;top:237px;line-height:20px;">Fatturato 2018\01</div>
<div class="t" style="left:607px;width:400px;text-align:right;top:237px;line-height:20px;">0,00</div>
<div style="left:794px;top:284px;width:216px;height:26px;background:#c5d8ef;"></div>
<div class="t" style="left:794px;top:284px;width:216px;line-height:26px;text-align:center;">Sintesi e Statistiche</div>
<div style="left:790px;top:324px;width:224px;height:20px;background:#428ac4;"></div>
<div class="t" style="left:796px;top:325px;line-height:20px;color:#fff;letter-spacing:-0.6px;word-spacing:1px;">RECAPITI CONTO 4010001</div>
<div style="left:790px;top:344px;width:224px;height:228px;background:#dfe6f0;"></div>
<div style="left:794px;top:367px;width:72px;height:1px;background:#90a7c2;"></div>
<div style="left:870px;top:367px;width:103px;height:1px;background:#90a7c2;"></div>
<div class="t" style="left:796px;top:349px;line-height:20px;">Telefono</div>
<div class="t" style="left:571px;width:400px;text-align:right;top:349px;line-height:20px;">0543/558492</div>
<div style="left:978px;top:348px;width:32px;height:20px;background:#c5d8ef;"></div>
<svg style="left:978px;top:348px;" width="32" height="20" viewBox="0 0 32 20"><path d="M8 12 V5.5 Q9 1.5 13.5 1.5 Q18.5 1.5 19.5 5.5" fill="none" stroke="#2c4892" stroke-width="2.6" stroke-linecap="round"/><path d="M8.2 4.5 Q11 4 13 5.5 Q16 7 19.5 6" fill="none" stroke="#2c4892" stroke-width="1.8"/><path d="M19.7 5.5 V12 Q19.7 17.6 13.5 17.6" fill="none" stroke="#2c4892" stroke-width="1.5"/><ellipse cx="6.8" cy="10.8" rx="2" ry="2.7" fill="none" stroke="#2c4892" stroke-width="1.5"/><ellipse cx="21" cy="10.8" rx="1.9" ry="2.7" fill="none" stroke="#2c4892" stroke-width="1.5"/><circle cx="11.7" cy="9.7" r="0.9" fill="#2c4892"/><circle cx="16.3" cy="9.7" r="0.9" fill="#2c4892"/><path d="M12 17.6 H14" stroke="#2c4892" stroke-width="2.4" stroke-linecap="round"/></svg>
<div style="left:794px;top:391px;width:72px;height:1px;background:#90a7c2;"></div>
<div style="left:870px;top:391px;width:140px;height:1px;background:#90a7c2;"></div>
<div class="t" style="left:796px;top:373px;line-height:20px;">Fax</div>
<div class="t" style="left:607px;width:400px;text-align:right;top:373px;line-height:20px;">0543/5528965</div>
<div style="left:794px;top:415px;width:72px;height:1px;background:#90a7c2;"></div>
<div style="left:870px;top:415px;width:140px;height:1px;background:#90a7c2;"></div>
<div class="t" style="left:796px;top:397px;line-height:20px;">Cellulare</div>
<div style="left:794px;top:439px;width:72px;height:1px;background:#90a7c2;"></div>
<div class="t" style="left:796px;top:421px;line-height:20px;">E-mail</div>
<div style="left:794px;top:463px;width:216px;height:1px;background:#90a7c2;"></div>
<div class="t" style="left:796px;top:445px;line-height:20px;">a.nardi@ntsinformatica.it</div>
<div style="left:790px;top:580px;width:224px;height:20px;background:#428ac4;"></div>
<div class="t" style="left:796px;top:581px;line-height:20px;color:#fff;letter-spacing:-0.6px;word-spacing:1px;">PRIVACY CONTO</div>
<div style="left:790px;top:600px;width:224px;height:177px;background:#dfe6f0;"></div>
<div style="left:794px;top:623px;width:112px;height:1px;background:#90a7c2;"></div>
<div style="left:910px;top:623px;width:100px;height:1px;background:#90a7c2;"></div>
<div class="t" style="left:796px;top:605px;line-height:20px;">Autorizz.ne privacy</div>
<div class="t" style="left:607px;width:400px;text-align:right;top:605px;line-height:20px;">Concessa</div>
<div style="left:794px;top:647px;width:112px;height:1px;background:#90a7c2;"></div>
<div style="left:910px;top:647px;width:100px;height:1px;background:#90a7c2;"></div>
<div class="t" style="left:796px;top:629px;line-height:20px;">Invio di e-mail</div>
<div class="t" style="left:607px;width:400px;text-align:right;top:625px;line-height:20px;letter-spacing:-0.25px;">Solo comunicazioni</div>
<div style="left:794px;top:671px;width:112px;height:1px;background:#90a7c2;"></div>
<div style="left:910px;top:671px;width:100px;height:1px;background:#90a7c2;"></div>
<div class="t" style="left:796px;top:653px;line-height:20px;">Profilazione</div>
<div class="t" style="left:607px;width:400px;text-align:right;top:653px;line-height:20px;">Non concessa</div>
<div style="left:794px;top:695px;width:112px;height:1px;background:#90a7c2;"></div>
<div style="left:910px;top:695px;width:100px;height:1px;background:#90a7c2;"></div>
<div class="t" style="left:796px;top:677px;line-height:20px;">Newsletter</div>
<div class="t" style="left:607px;width:400px;text-align:right;top:677px;line-height:20px;">Non concessa</div>
<div style="left:794px;top:719px;width:112px;height:1px;background:#90a7c2;"></div>
<div style="left:910px;top:719px;width:100px;height:1px;background:#90a7c2;"></div>
<div class="t" style="left:796px;top:701px;line-height:20px;">Contatto telefonico</div>
<div class="t" style="left:607px;width:400px;text-align:right;top:701px;line-height:20px;">Non concessa</div>
<div style="left:794px;top:743px;width:112px;height:1px;background:#90a7c2;"></div>
<div style="left:910px;top:743px;width:100px;height:1px;background:#90a7c2;"></div>
<div class="t" style="left:796px;top:725px;line-height:20px;">Marketing</div>
<div class="t" style="left:607px;width:400px;text-align:right;top:725px;line-height:20px;">(Non definita)</div>
<div style="left:1px;top:777px;width:1033px;height:1px;background:#fff;"></div>
<div style="left:1px;top:778px;width:1033px;height:4px;background:linear-gradient(to bottom,#e2e4e8,#eef0f4);"></div>
<div style="left:1018px;top:64px;width:15px;height:713px;background:#f0f0f0;"></div>
<div style="left:1018px;top:81px;width:15px;height:634px;background:#cdcdcd;"></div>
<svg style="left:1021px;top:68px;" width="9" height="9" viewBox="0 0 9 9"><path d="M1.5 6.5 L4.5 3 L7.5 6.5" fill="none" stroke="#5a5a5a" stroke-width="2.3"/></svg>
<svg style="left:1021px;top:764px;" width="9" height="9" viewBox="0 0 9 9"><path d="M1.5 2.5 L4.5 6 L7.5 2.5" fill="none" stroke="#5a5a5a" stroke-width="2.3"/></svg>
</body></html>
